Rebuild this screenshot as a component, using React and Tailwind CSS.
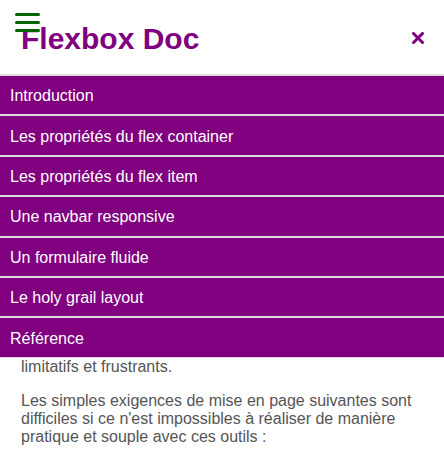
import React from 'react';

const links = [
    'Introduction',
    'Les propriétés du flex container',
    'Les propriétés du flex item',
    'Une navbar responsive',
    'Un formulaire fluide',
    'Le holy grail layout',
    'Référence',
];

const App = () => {
    return (
        <div className="h-[456px] overflow-hidden bg-white font-['Liberation_Sans',Arial,sans-serif]">
            {/* header */}
            <header className="relative flex h-[74px] items-center justify-between pl-[21px] pr-[20px]">
                <button className="absolute left-[15px] top-[13px] flex w-[25px] flex-col gap-[5px]">
                    <span className="block h-[3px] w-full rounded-full bg-[#006400]" />
                    <span className="block h-[3px] w-full rounded-full bg-[#006400]" />
                    <span className="block h-[3px] w-full rounded-full bg-[#006400]" />
                </button>
                <h1 className="mt-[4px] text-[30px] font-bold leading-none text-[#800080]">Flexbox Doc</h1>
                <button className="mt-[2px] text-[#800080]">
                    <svg width="12" height="12" viewBox="0 0 12 12">
                        <path d="M1.5 1.5 L10.5 10.5 M10.5 1.5 L1.5 10.5" stroke="currentColor" strokeWidth="3" strokeLinecap="square" />
                    </svg>
                </button>
            </header>

            {/* side menu */}
            <nav className="border-b border-[#e6d6e6]">
                <ul>
                    {links.map(link => (
                        <li key={link} className="flex h-[40.4px] items-center border-t-2 border-[#dddddd] bg-[#800080] pl-[10px] pt-[2px] text-[16px] text-white">
                            {link}
                        </li>
                    ))}
                </ul>
            </nav>

            <main className="px-[21px] text-[16px] leading-[18px] text-[#555555]">
                <p className="mb-4">limitatifs et frustrants.</p>
                <p className="mb-4">
                    Les simples exigences de mise en page suivantes sont difficiles si ce
                    n'est impossibles à réaliser de manière pratique et souple avec ces outils :
                </p>
            </main>
        </div>
    );
};

export default App;
